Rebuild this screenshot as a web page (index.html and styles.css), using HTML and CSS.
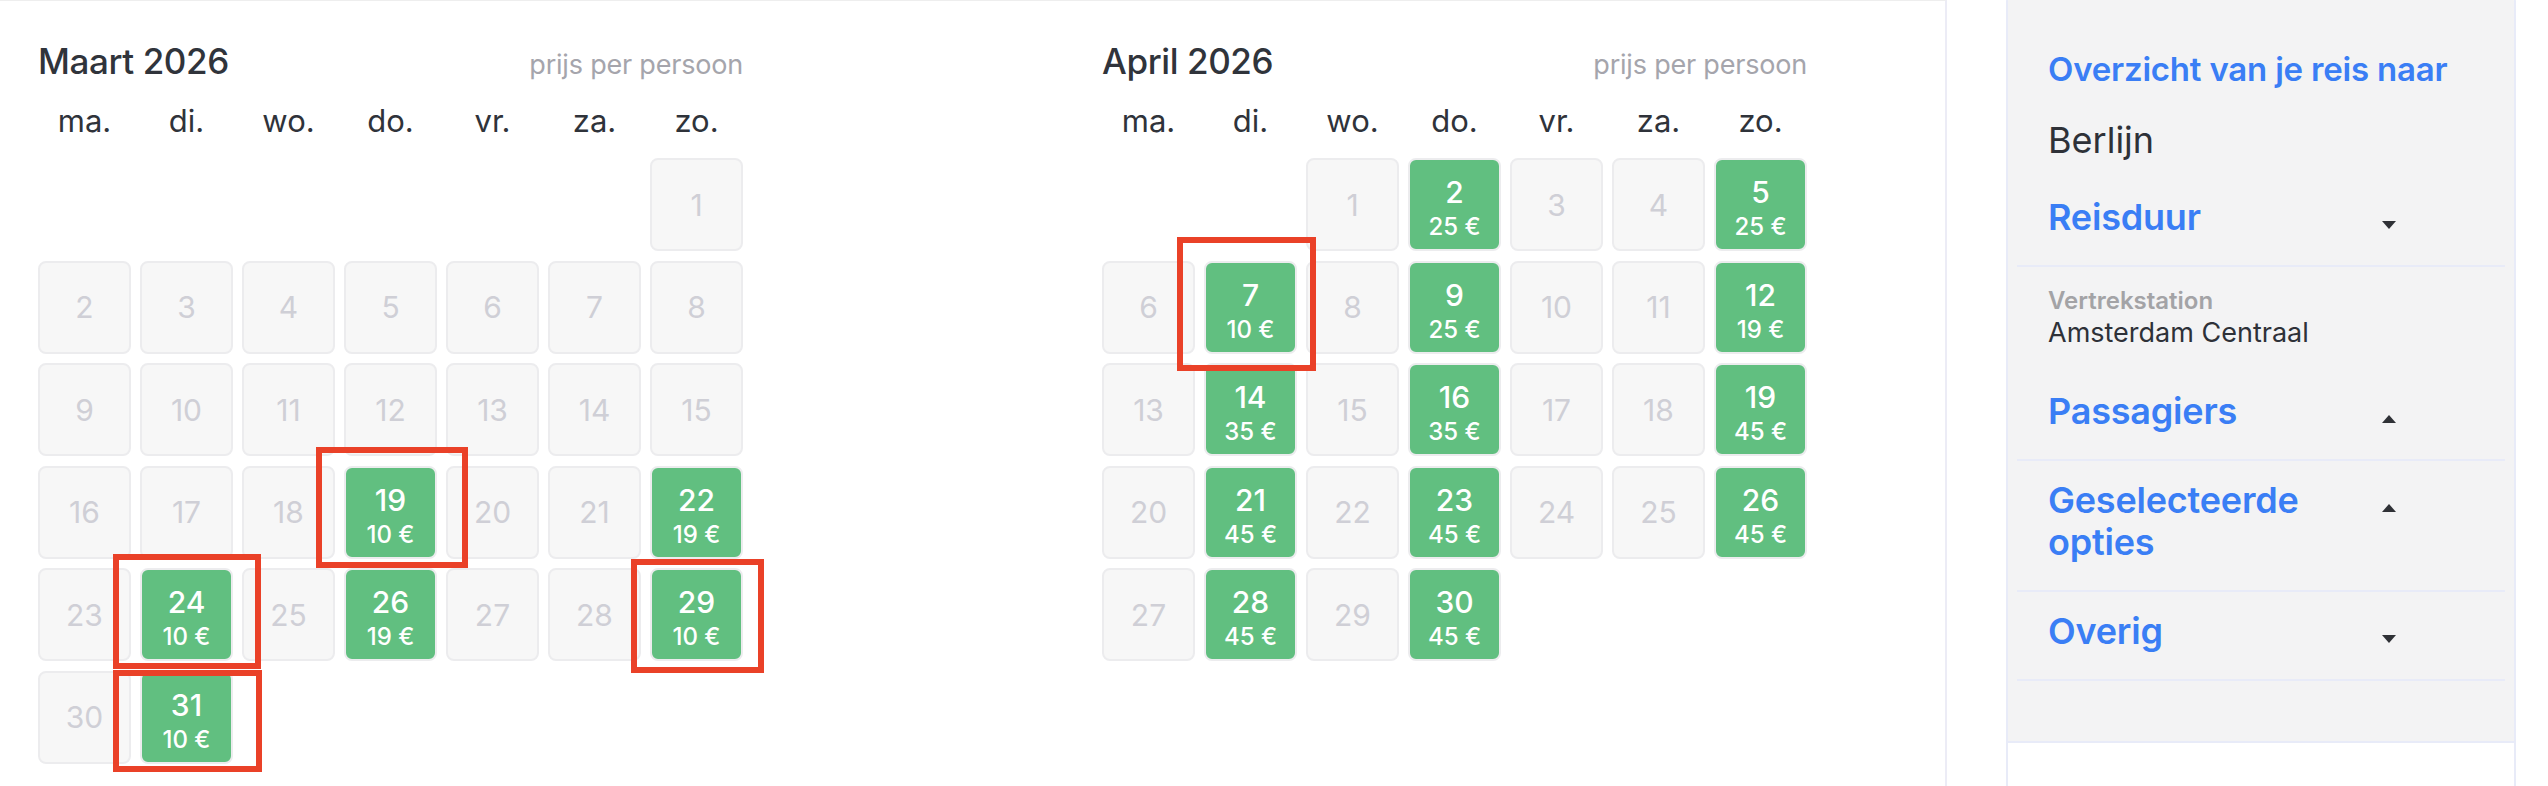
FILE: index.html
```html
<!DOCTYPE html>
<html lang="nl">
<head>
<meta charset="utf-8">
<title>Kalender</title>
<link rel="stylesheet" href="styles.css">
</head>
<body>
<div class="page">
  <main class="calendars">
    <section class="month">
      <div class="month-head">
        <h2 class="month-title">Maart 2026</h2>
        <span class="price-note">prijs per persoon</span>
      </div>
      <div class="weekdays">
        <span>ma.</span><span>di.</span><span>wo.</span><span>do.</span><span>vr.</span><span>za.</span><span>zo.</span>
      </div>
      <div class="days">
        <div class="empty"></div><div class="empty"></div><div class="empty"></div><div class="empty"></div><div class="empty"></div><div class="empty"></div>
        <div class="day">1</div>
        <div class="day">2</div><div class="day">3</div><div class="day">4</div><div class="day">5</div><div class="day">6</div><div class="day">7</div><div class="day">8</div>
        <div class="day">9</div><div class="day">10</div><div class="day">11</div><div class="day">12</div><div class="day">13</div><div class="day">14</div><div class="day">15</div>
        <div class="day">16</div><div class="day">17</div><div class="day">18</div>
        <div class="day open"><span class="num">19</span><span class="price">10 €</span></div>
        <div class="day">20</div><div class="day">21</div>
        <div class="day open"><span class="num">22</span><span class="price">19 €</span></div>
        <div class="day">23</div>
        <div class="day open"><span class="num">24</span><span class="price">10 €</span></div>
        <div class="day">25</div>
        <div class="day open"><span class="num">26</span><span class="price">19 €</span></div>
        <div class="day">27</div><div class="day">28</div>
        <div class="day open"><span class="num">29</span><span class="price">10 €</span></div>
        <div class="day">30</div>
        <div class="day open"><span class="num">31</span><span class="price">10 €</span></div>
      </div>
    </section>

    <section class="month">
      <div class="month-head">
        <h2 class="month-title">April 2026</h2>
        <span class="price-note">prijs per persoon</span>
      </div>
      <div class="weekdays">
        <span>ma.</span><span>di.</span><span>wo.</span><span>do.</span><span>vr.</span><span>za.</span><span>zo.</span>
      </div>
      <div class="days">
        <div class="empty"></div><div class="empty"></div>
        <div class="day">1</div>
        <div class="day open"><span class="num">2</span><span class="price">25 €</span></div>
        <div class="day">3</div><div class="day">4</div>
        <div class="day open"><span class="num">5</span><span class="price">25 €</span></div>
        <div class="day">6</div>
        <div class="day open"><span class="num">7</span><span class="price">10 €</span></div>
        <div class="day">8</div>
        <div class="day open"><span class="num">9</span><span class="price">25 €</span></div>
        <div class="day">10</div><div class="day">11</div>
        <div class="day open"><span class="num">12</span><span class="price">19 €</span></div>
        <div class="day">13</div>
        <div class="day open"><span class="num">14</span><span class="price">35 €</span></div>
        <div class="day">15</div>
        <div class="day open"><span class="num">16</span><span class="price">35 €</span></div>
        <div class="day">17</div><div class="day">18</div>
        <div class="day open"><span class="num">19</span><span class="price">45 €</span></div>
        <div class="day">20</div>
        <div class="day open"><span class="num">21</span><span class="price">45 €</span></div>
        <div class="day">22</div>
        <div class="day open"><span class="num">23</span><span class="price">45 €</span></div>
        <div class="day">24</div><div class="day">25</div>
        <div class="day open"><span class="num">26</span><span class="price">45 €</span></div>
        <div class="day">27</div>
        <div class="day open"><span class="num">28</span><span class="price">45 €</span></div>
        <div class="day">29</div>
        <div class="day open"><span class="num">30</span><span class="price">45 €</span></div>
      </div>
    </section>

    <div class="mark mark-m19"></div>
    <div class="mark mark-m24"></div>
    <div class="mark mark-m31"></div>
    <div class="mark mark-m29"></div>
    <div class="mark mark-a7"></div>
  </main>

  <aside class="summary">
    <div class="summary-body">
      <div class="intro">
        <h3 class="intro-title">Overzicht van je reis naar</h3>
        <p class="destination">Berlijn</p>
      </div>
      <div class="section">
        <span class="section-title">Reisduur</span>
        <span class="caret down"></span>
      </div>
      <div class="info">
        <div class="info-label">Vertrekstation</div>
        <div class="info-value">Amsterdam Centraal</div>
      </div>
      <div class="section">
        <span class="section-title">Passagiers</span>
        <span class="caret up"></span>
      </div>
      <div class="section">
        <span class="section-title">Geselecteerde opties</span>
        <span class="caret up"></span>
      </div>
      <div class="section">
        <span class="section-title">Overig</span>
        <span class="caret down"></span>
      </div>
    </div>
    <div class="summary-foot"></div>
  </aside>
</div>
</body>
</html>
```

FILE: styles.css
```css
* { box-sizing: border-box; }

html, body {
  margin: 0;
  padding: 0;
  background: #ffffff;
  font-family: "Inter", "Noto Sans", sans-serif;
  color: #2f333a;
}

.page {
  display: flex;
  align-items: flex-start;
  width: 2548px;
  height: 786px;
  overflow: hidden;
}

.calendars {
  position: relative;
  flex: 0 0 1947px;
  height: 786px;
  display: flex;
  gap: 359px;
  padding: 39px 0 0 38px;
  border-top: 1px solid #eeeeee;
  border-right: 2px solid #ececf6;
}

.month {
  width: 705px;
}

.month-head {
  display: flex;
  justify-content: space-between;
  align-items: baseline;
}

.month-title {
  margin: 0;
  font-size: 35px;
  line-height: 42px;
  font-weight: 500;
  letter-spacing: -0.4px;
  color: #30343b;
}

.price-note {
  font-size: 27px;
  line-height: 34px;
  color: #a5a5ac;
  letter-spacing: -0.2px;
}

.weekdays {
  display: grid;
  grid-template-columns: repeat(7, 93px);
  column-gap: 9px;
  margin-top: 20px;
  font-size: 31px;
  line-height: 38px;
  text-align: center;
  color: #2f333a;
}

.days {
  display: grid;
  grid-template-columns: repeat(7, 93px);
  grid-auto-rows: 93px;
  column-gap: 9px;
  row-gap: 9.6px;
  margin-top: 18px;
}

.day {
  display: flex;
  flex-direction: column;
  align-items: center;
  justify-content: center;
  border: 2px solid #ececee;
  border-radius: 8px;
  background: #f7f7f7;
  color: #cfcfd6;
  font-size: 30px;
  line-height: 36px;
}

.day.open {
  background: #61bf80;
  color: #ffffff;
  padding-top: 5px;
}

.day.open .num {
  font-size: 30px;
  line-height: 40px;
  font-weight: 500;
}

.day.open .price {
  font-size: 24px;
  line-height: 30px;
  font-weight: 500;
}

.mark {
  position: absolute;
  border: 6px solid #ea4128;
  pointer-events: none;
}

.mark-m19 { left: 316px; top: 446px; width: 152px; height: 121px; }
.mark-m24 { left: 113px; top: 553px; width: 148px; height: 115px; }
.mark-m31 { left: 113px; top: 669px; width: 149px; height: 102px; }
.mark-m29 { left: 631px; top: 558px; width: 133px; height: 114px; }
.mark-a7  { left: 1177px; top: 236px; width: 139px; height: 134px; }

.summary {
  flex: 0 0 510px;
  margin-left: 59px;
  margin-top: -8px;
  border: 2px solid #e8ebf8;
  border-radius: 10px 10px 0 0;
  overflow: hidden;
}

.summary-body {
  background: #f3f3f4;
  padding: 55px 9px 60px;
  border-bottom: 2px solid #e8ebf8;
}

.intro {
  padding-left: 31px;
}

.intro-title {
  margin: 0;
  font-size: 33px;
  line-height: 40px;
  font-weight: 600;
  color: #3a7ef5;
  letter-spacing: -0.2px;
}

.destination {
  margin: 29px 0 0;
  font-size: 36px;
  line-height: 44px;
  color: #2e3138;
}

.section {
  display: flex;
  align-items: flex-start;
  padding: 18px 0 27px 31px;
  border-bottom: 2px solid #e8ebf8;
}

.intro + .section {
  margin-top: 16px;
}

.section-title {
  flex: 0 0 334px;
  font-size: 36px;
  line-height: 42px;
  font-weight: 600;
  color: #3a7ef5;
  letter-spacing: -0.2px;
}

.caret {
  width: 0;
  height: 0;
  margin-top: 25px;
  border-left: 7.5px solid transparent;
  border-right: 7.5px solid transparent;
}

.caret.down { border-top: 8px solid #2f3136; }
.caret.up { border-bottom: 8px solid #2f3136; }

.info {
  padding: 19px 0 23px 31px;
}

.info-label {
  font-size: 24px;
  line-height: 30px;
  font-weight: 600;
  color: #a3a3a6;
}

.info-value {
  margin-top: 1px;
  font-size: 27px;
  line-height: 32px;
  color: #2e3138;
}

.summary-foot {
  height: 120px;
  background: #ffffff;
}
```
